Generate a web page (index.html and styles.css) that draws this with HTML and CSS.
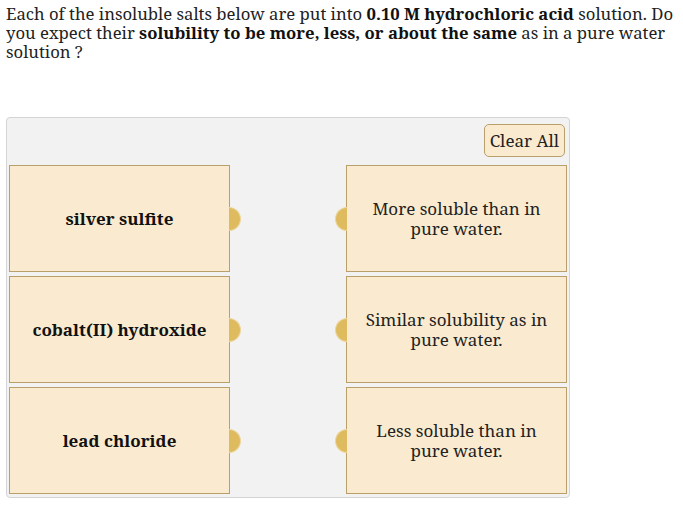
FILE: index.html
```html
<!DOCTYPE html>
<html lang="en">
<head>
    <meta charset="UTF-8">
    <meta name="viewport" content="width=device-width, initial-scale=1.0">
    <title>Solubility matching</title>
    <link rel="stylesheet" href="styles.css">
</head>
<body>
    <p class="question">
        Each of the insoluble salts below are put into <b>0.10 M hydrochloric acid</b> solution. Do
        you expect their <b>solubility to be more, less, or about the same</b> as in a pure water
        solution ?
    </p>

<!-- Matching board---------------------------------------------------------------->
    <div class="board">
        <div class="board-top">
            <button class="btn-clear">Clear All</button>
        </div>
        <div class="board-body">
            <div class="column">
                <div class="item salt">silver sulfite<span class="knob knob-right"></span></div>
                <div class="item salt">cobalt(II) hydroxide<span class="knob knob-right"></span></div>
                <div class="item salt">lead chloride<span class="knob knob-right"></span></div>
            </div>
            <div class="column">
                <div class="item answer"><span class="knob knob-left"></span>More soluble than in<br>pure water.</div>
                <div class="item answer"><span class="knob knob-left"></span>Similar solubility as in<br>pure water.</div>
                <div class="item answer"><span class="knob knob-left"></span>Less soluble than in<br>pure water.</div>
            </div>
        </div>
    </div>
</body>
</html>
```

FILE: styles.css
```css
body {
  font-family: "Noto Serif", "DejaVu Serif", serif;
  margin: 0;
  padding: 0 6px;
  background-color: #fff;
  color: #222;
}
.question {
  margin: 0;
  padding-top: 4px;
  font-size: 16.7px;
  line-height: 19px;
  width: 677px;
}
.question b {
  color: #111;
}

.board {
  margin-top: 56px;
  width: 564px;
  height: 381px;
  border: 1px solid #d4d4d4;
  border-radius: 4px;
  background-color: #f2f2f2;
  box-sizing: border-box;
}
.board-top {
  display: flex;
  justify-content: flex-end;
  padding: 6px 4px 0 0;
  height: 47px;
  box-sizing: border-box;
}
.btn-clear {
  font-family: inherit;
  font-size: 17px;
  color: #222;
  background-color: #faebd0;
  border: 1px solid #b9a06a;
  border-radius: 5px;
  padding: 0 5px;
  height: 33px;
  cursor: pointer;
}
.board-body {
  display: flex;
  justify-content: space-between;
  padding: 0 2px;
}
.column {
  display: flex;
  flex-direction: column;
  gap: 4px;
}
.item {
  position: relative;
  width: 221px;
  height: 107px;
  box-sizing: border-box;
  border: 1px solid #b9a06a;
  background-color: #faebd0;
  display: flex;
  align-items: center;
  justify-content: center;
  text-align: center;
  font-size: 17px;
  line-height: 20px;
}
.salt {
  font-weight: bold;
  color: #111;
}
.answer {
  color: #222;
}

/* half round handles on the box edges */
.knob {
  position: absolute;
  top: 50%;
  margin-top: -12px;
  width: 12px;
  height: 24px;
  background-color: #dfbb5f;
  box-sizing: border-box;
  border: 1px solid #ecd7a0;
}
.knob-right {
  left: 100%;
  border-left: none;
  border-radius: 0 12px 12px 0;
}
.knob-left {
  right: 100%;
  border-right: none;
  border-radius: 12px 0 0 12px;
}
```
